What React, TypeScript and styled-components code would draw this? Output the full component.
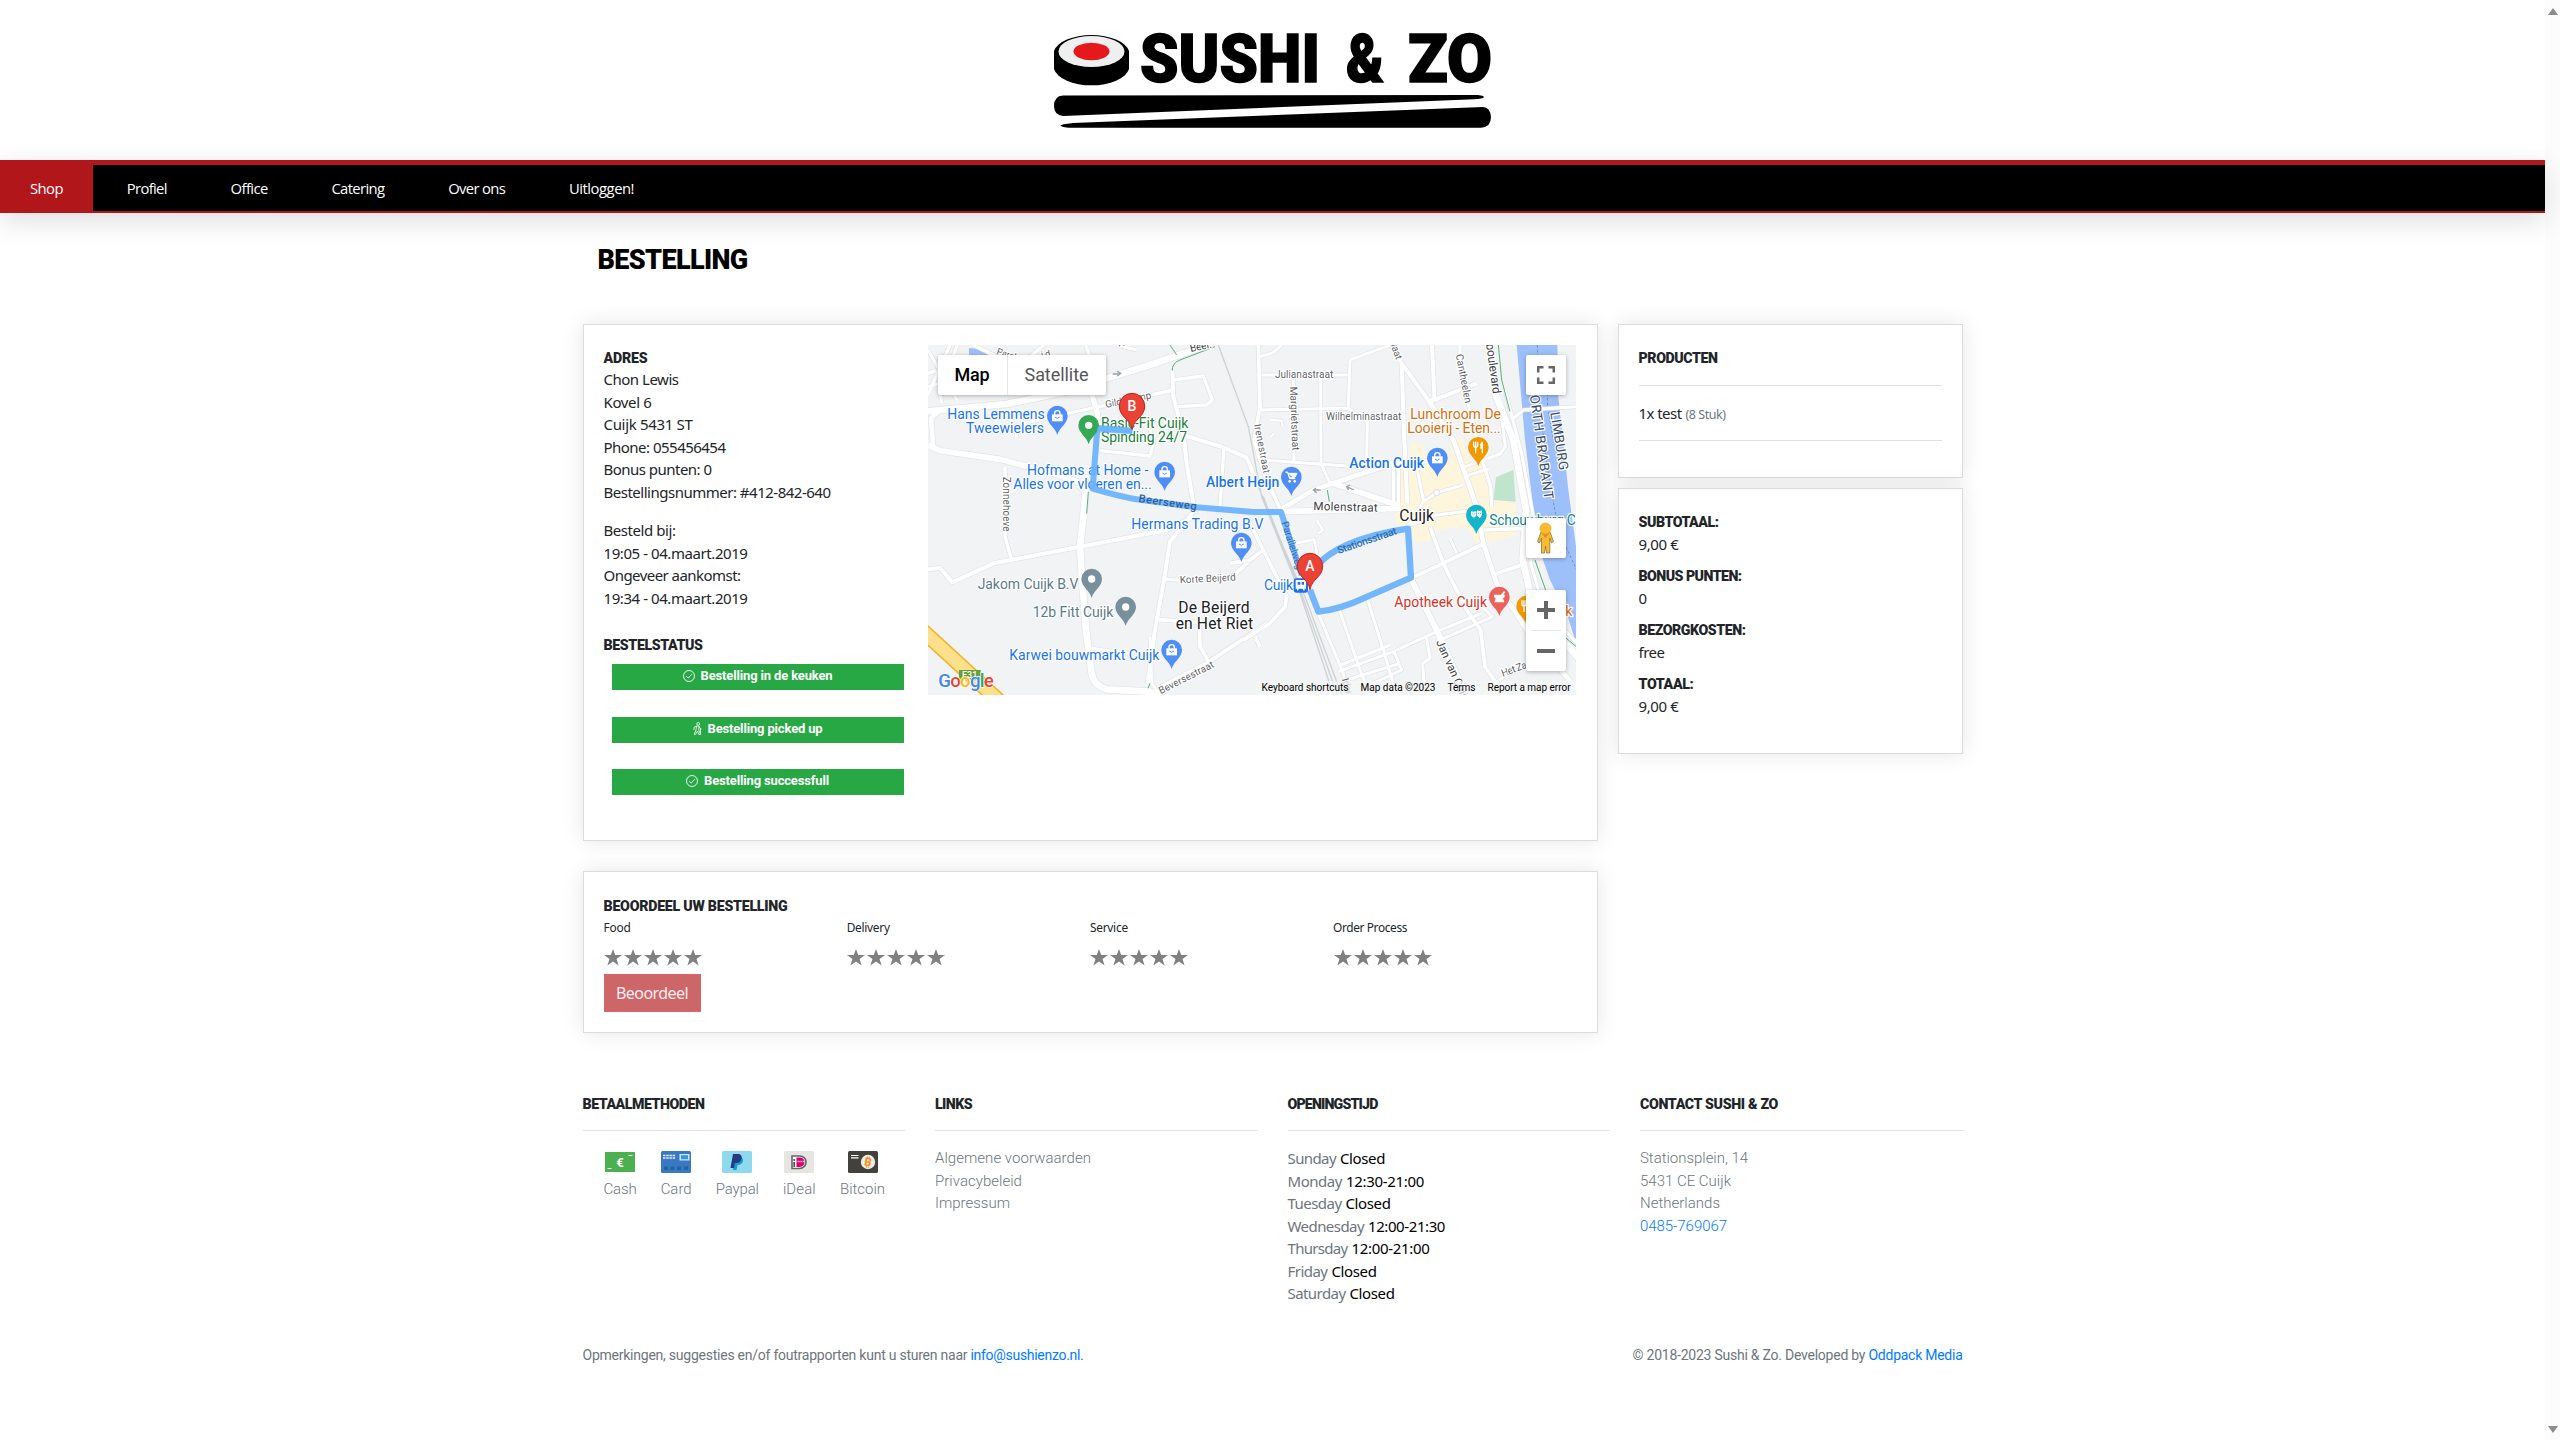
import React, { useLayoutEffect, useRef, useState } from 'react';
import styled, { createGlobalStyle, css } from 'styled-components';

const sans = '"Noto Sans", "Open Sans", sans-serif';
const roboto = 'Roboto, "Liberation Sans", sans-serif';

const Global = createGlobalStyle`
  *, *::before, *::after { box-sizing: border-box; }
  html, body { margin: 0; padding: 0; background: #fff; overflow: hidden; }
  body { font-family: ${sans}; font-size: 15px; line-height: 22.5px; color: #212529; }
`;

/* ---------- text fitted to a fixed measure by tracking ---------- */

const Tracked = styled.span`
  display: inline-block;
  white-space: pre;
`;

function Fit({ w, children }: { w: number; children: string }) {
  const ref = useRef<HTMLSpanElement>(null);
  const [gap, setGap] = useState<number | null>(null);
  useLayoutEffect(() => {
    if (ref.current && gap === null) {
      const natural = ref.current.getBoundingClientRect().width;
      setGap((w - natural) / children.length);
    }
  }, [gap, w, children]);
  return (
    <Tracked ref={ref} style={gap === null ? undefined : { letterSpacing: gap }}>
      {children}
    </Tracked>
  );
}

/* ---------- page frame ---------- */

const Page = styled.div`
  display: grid;
  grid-template-columns: 1fr 15px;
  height: 1440px;
`;

const ScrollTrack = styled.div`
  background: #fcfcfc;
  display: flex;
  flex-direction: column;
  justify-content: space-between;
  align-items: center;
  padding: 8px 0 7px;
`;

const Arrow = styled.i<{ $down?: boolean }>`
  border: 5px solid transparent;
  border-top-width: 0;
  border-bottom: 7px solid #8b8b8b;
  ${(p) => p.$down && css`transform: rotate(180deg);`}
`;

const Header = styled.header`
  height: 160px;
  display: flex;
  justify-content: center;
  padding-top: 31px;
`;

const Nav = styled.nav`
  position: relative;
  height: 53px;
  background: #000;
  border-top: 5px solid #b1161a;
  border-bottom: 2px solid #b1161a;
  box-shadow: 0 8px 28px rgba(0, 0, 0, 0.13);
  display: flex;
  gap: 3.8px;
`;

const NavItem = styled.a<{ $active?: boolean }>`
  padding: 0 30px;
  line-height: 46px;
  font-family: "Open Sans", sans-serif;
  font-size: 14.8px;
  color: #fff;
  background: ${(p) => (p.$active ? '#b1161a' : 'transparent')};
`;

const Container = styled.div`
  width: 1380px;
  margin: 0 auto;
`;

const Title = styled.h1`
  margin: 0;
  height: 111px;
  padding: 27px 0 0 15px;
  font: 900 27px/40px ${roboto};
  color: #000;
`;

const Heading = styled.h2`
  margin: 0;
  height: 24px;
  padding-top: 1px;
  font: 900 14.2px/25px ${roboto};
  color: #212529;
`;

const Columns = styled.div`
  display: grid;
  grid-template-columns: 1015px 345px;
  justify-content: space-between;
`;

const Stack = styled.div<{ $gap: number }>`
  display: flex;
  flex-direction: column;
  align-items: stretch;
  gap: ${(p) => p.$gap}px;
`;

const Card = styled.section<{ $h: number }>`
  height: ${(p) => p.$h}px;
  padding: 20px;
  border: 1px solid #dcdcdc;
  box-shadow: 0 0 20px rgba(0, 0, 0, 0.1);
  background: #fff;
`;

const OrderCard = styled(Card)`
  display: grid;
  grid-template-columns: 300px 648px;
  column-gap: 24px;
`;

const Block = styled.div<{ $mb: number }>`
  margin-top: -0.7px;
  margin-bottom: ${(p) => p.$mb}px;
`;

const Line = styled.div`
  height: 22.5px;
`;

const StatusList = styled.div`
  display: flex;
  flex-direction: column;
  gap: 26.6px;
  margin: 8px 0 0 8px;
`;

const Status = styled.div`
  height: 26px;
  background: #28a745;
  color: #fff;
  display: flex;
  align-items: center;
  justify-content: center;
  gap: 6px;
  font: 700 13px/24px ${roboto};
  padding-bottom: 2px;
`;

const Rule = styled.hr<{ $m: string }>`
  border: 0;
  border-top: 1px solid #e2e2e2;
  margin: ${(p) => p.$m};
`;

const Muted = styled.small`
  font-size: 12.5px;
  color: #6c757d;
  margin-left: 4px;
`;

const SummaryRow = styled.div`
  height: 54px;
`;

const RatingCard = styled(Card)`
  padding-top: 21px;
`;

const RatingGrid = styled.div`
  display: grid;
  grid-template-columns: repeat(4, 243.2px);
  margin-top: 1px;
`;

const RatingLabel = styled.div`
  font-size: 11.9px;
  line-height: 18px;
  color: #212529;
`;

const Stars = styled.div`
  display: flex;
  gap: 2px;
  padding: 13px 0 0 0.5px;
  height: 38px;
`;

const RateButton = styled.button`
  width: 97px;
  height: 38px;
  padding: 0;
  border: 1px solid #e4606a;
  background: #cd6669;
  color: #fbeeee;
  font: 16px/36px ${sans};
`;

/* ---------- map ---------- */

const MapBox = styled.div`
  position: relative;
  width: 648px;
  height: 350px;
  overflow: hidden;
  background: #f1f3f4;
`;

const MapTypes = styled.div`
  position: absolute;
  left: 10px;
  top: 10px;
  display: flex;
  height: 40px;
  background: #fff;
  border-radius: 2px;
  box-shadow: 0 1px 4px rgba(0, 0, 0, 0.3);
`;

const MapType = styled.div<{ $on?: boolean }>`
  padding: 0 17px;
  font: ${(p) => (p.$on ? 500 : 400)} 18px/40px ${roboto};
  color: ${(p) => (p.$on ? '#000' : '#565656')};
  & + & { border-left: 1px solid #e6e6e6; }
`;

const MapButton = styled.div<{ $top: number; $h: number }>`
  position: absolute;
  left: 598px;
  top: ${(p) => p.$top}px;
  width: 40px;
  height: ${(p) => p.$h}px;
  background: #fff;
  border-radius: 2px;
  box-shadow: 0 1px 4px rgba(0, 0, 0, 0.3);
  svg { display: block; }
`;

const MapTerms = styled.div`
  position: absolute;
  right: 0;
  bottom: 0;
  height: 14px;
  display: flex;
  gap: 12px;
  padding: 0 5px 0 6px;
  background: rgba(245, 245, 245, 0.7);
  font: 10px/14px ${roboto};
  color: #000;
`;

/* ---------- footer ---------- */

const FooterGrid = styled.footer`
  display: grid;
  grid-template-columns: repeat(4, 322.5px);
  justify-content: space-between;
  padding-top: 58px;
  height: 311px;
`;

const FooterText = styled.div`
  font-family: ${roboto};
  font-weight: 300;
  font-size: 15px;
  color: #6c757d;
`;

const HoursText = styled.div`
  color: #6c757d;
  margin-top: 0.5px;
`;

const Hours = styled.span`
  color: #000;
  margin-left: 4px;
`;

const Link = styled.a`
  color: #007bff;
`;

const Payments = styled.div`
  display: flex;
  justify-content: space-between;
  padding: 0 20px 0 21px;
`;

const Payment = styled.div`
  display: flex;
  flex-direction: column;
  align-items: center;
  font: 300 15px/22px ${roboto};
  color: #6c757d;
  svg { margin-bottom: 5px; display: block; }
`;

const Bottom = styled.div`
  display: flex;
  justify-content: space-between;
  font: 14px/22px ${roboto};
  color: #6c757d;
`;

/* ---------- drawings ---------- */

const Logo = () => (
  <svg width="440" height="98" viewBox="0 0 440 98">
    <path d="M1 20A38 19 0 0 1 76 20V38A38 19.500 0 0 1 1 38Z" />
    <ellipse cx="38.500" cy="20.500" rx="33" ry="15.500" fill="#eef0f0" />
    <ellipse cx="38.500" cy="20.500" rx="18" ry="8.700" fill="#e5191c" />
    <g fontFamily="Roboto, sans-serif" fontWeight="900" fontSize="66" stroke="#000" strokeWidth="1.500">
      <text x="87" y="50.500" textLength="180" lengthAdjust="spacingAndGlyphs">SUSHI</text>
      <text x="293" y="50.500" textLength="38" lengthAdjust="spacingAndGlyphs">&amp;</text>
      <text x="355" y="50.500" textLength="84" lengthAdjust="spacingAndGlyphs">ZO</text>
    </g>
    <path d="M10 64.500L425 64Q433 65 430 67Q427 68 415 68.500L10 85Q1 84 1 75Q1 65 10 64.500Z" />
    <path d="M430 76L20 92Q5 93.500 8 95Q10 97 22 96.800H428Q438 96 438 86Q437 76 430 76Z" />
  </svg>
);

const CheckIcon = () => (
  <svg width="12" height="12" viewBox="0 0 12 12" fill="none" stroke="#fff" strokeWidth=".9">
    <circle cx="6" cy="6" r="5.500" />
    <path d="M3.200 6.200L5.200 8.100L8.900 4.200" />
  </svg>
);

const WalkIcon = () => (
  <svg width="9" height="13" viewBox="0 0 9 13" fill="none" stroke="#fff" strokeWidth=".8">
    <circle cx="5.200" cy="1.900" r="1.400" />
    <path d="M3.500 4L1 5.500V8M3.500 4H6L6.600 6L8.500 7M3.500 4L3 8L1.200 12.300H2.600L4.500 9L5.800 12.500H7.500L5.800 8L6 4.500M7.500 7V12" />
  </svg>
);

const Star = () => (
  <svg width="18" height="17" viewBox="0 0 17 17" preserveAspectRatio="none">
    <path fill="#808080" d="M8.500 0L10.600 6H17L11.800 9.900L13.800 16.500L8.500 12.500L3.200 16.500L5.200 9.900L0 6H6.400Z" />
  </svg>
);

type Road = [string, number];

const westRoads: Road[] = [
  ['M0 246L260 222L500 172L560 145L690 105L850 50', 20],
  ['M505 170L518 200L532 250L535 290', 16],
  ['M24 345L60 362L240 388L400 430L470 455L497 490', 17],
  ['M40 355L33 265L60 240', 14],
  ['M497 480L490 560L480 650L487 760L498 900L515 1030Q520 1065 560 1078L690 1085L740 1110', 20],
  ['M0 720L60 714L97 757L220 700L480 650L740 600L820 560', 12],
  ['M255 410L255 620L275 690', 10],
  ['M290 322L290 300L320 278L420 255L540 230L760 180', 10],
  ['M757 120L760 200L790 310L800 400L815 490L822 530', 12],
  ['M760 150L850 138L877 210L860 225L770 230', 10],
  ['M790 315L910 352L980 383L1000 430', 12],
  ['M912 352L900 530', 10],
  ['M540 362L690 378L702 330L690 300', 10],
  ['M820 545L750 635L732 750L705 900L683 1060', 12],
  ['M690 920L695 1060L720 1095', 9],
  ['M720 1072L860 1000L1040 880', 12],
  ['M705 868L838 878L840 950L872 1005', 11],
  ['M732 747L790 752', 9],
  ['M920 755L1030 655', 12],
  ['M515 955L640 972', 9],
  ['M24 195L90 45M24 130L48 122M24 60L112 212M112 45L80 130M160 45L250 90M372 45L330 80M497 45L510 80M590 45L650 60M24 170L60 160L64 220', 10],
];

const eastRoads: Road[] = [
  ['M25 45L30 230L12 330L45 440L90 535', 11],
  ['M30 80L70 68L95 45', 9],
  ['M35 135L295 135M30 240L295 235M300 90L295 235L352 275L350 390M300 90L420 45', 9],
  ['M130 150L132 395M212 135L213 400L240 460M40 390L290 408', 9],
  ['M60 270L95 272L98 290M60 322L72 310', 7],
  ['M425 45L455 100L462 310L472 520', 12],
  ['M455 100L538 215L553 205L546 45M540 215L680 160', 12],
  ['M538 215L560 250L610 330L680 530L700 640L740 760L830 900L1000 1100', 14],
  ['M630 45L630 80M650 200L690 370L722 470L725 530', 10],
  ['M430 400V525M445 400V525', 10],
  ['M640 412L750 372L766 350L755 265M650 437L716 417M500 410L520 510', 9],
  ['M470 595L520 515L560 488L640 465M470 590L560 555L680 540', 9],
  ['M700 600L830 595M490 742L700 642M735 732L830 700', 11],
  ['M790 265L820 240L980 230', 9],
  ['M540 590L580 700L650 840L692 900L705 1010L750 1075', 11],
  ['M265 830L330 1020L360 1095M350 800L400 960L440 1095M205 850L280 1030L290 1090', 9],
  ['M265 1025L430 965L560 905L695 850M265 1008L420 945M370 1060L455 1020L432 965M290 1050L450 1000', 9],
  ['M560 935L728 860L700 835M530 925L540 985L518 1000L522 1060', 9],
  ['M137 640L192 628L205 690M200 570L218 600L205 610M600 625L620 670', 8],
  ['M-60 700L0 690L40 660L-10 560M40 660L110 800L105 830L60 880L-20 930M15 920L30 950', 11],
  ['M700 1095L760 1040L850 1000', 10],
  ['M480 740L560 900L650 1100', 17],
  ['M90 540L190 480L250 460L430 400L590 390', 14],
  ['M250 460L450 528M90 545L450 535', 17],
  ['M735 190L790 330L828 540L818 690L850 830L990 990', 20],
  ['M765 180L815 370L850 560L842 700L880 830L990 950', 9],
];

const Roads = ({ roads }: { roads: Road[] }) => (
  <g fill="none" strokeLinejoin="round">
    {roads.map(([d, w]) => <path key={d} d={d} stroke="#e0e3e6" strokeWidth={w + 4} />)}
    {roads.map(([d, w]) => <path key={d} d={d} stroke="#fff" strokeWidth={w} />)}
  </g>
);

interface LabelProps {
  x: number; y: number; w: number; t: string; c?: string; s?: number; r?: number; b?: boolean;
}

const Label = ({ x, y, w, t, c = '#1a73e8', s = 42, r = 0, b }: LabelProps) => (
  <text
    x={x} y={y} textLength={w} fontSize={s} fill={c} fontWeight={b ? 500 : 400}
    transform={r ? `rotate(${r} ${x} ${y})` : undefined}
    stroke="#fff" strokeWidth="7" strokeLinejoin="round" paintOrder="stroke"
  >{t}</text>
);

const westLabels: LabelProps[] = [
  { x: 228, y: 72, w: 60, t: 'Paral', c: '#5f6368', s: 28, r: 18 },
  { x: 365, y: 85, w: 28, t: 'id', c: '#5f6368', s: 28, r: -12 },
  { x: 595, y: 50, w: 60, t: 'Noor', c: '#5f6368', s: 30, r: -10 },
  { x: 812, y: 66, w: 66, t: 'Beer.', c: '#3c4043', s: 32, r: -12 },
  { x: 558, y: 234, w: 140, t: 'Gildekamp', c: '#5f6368', s: 30, r: -12 },
  { x: 250, y: 440, w: 165, t: 'Zonnehoeve', c: '#5f6368', s: 30, r: 90 },
  { x: 1002, y: 284, w: 150, t: 'Irenestraat', c: '#5f6368', s: 30, r: 79 },
  { x: 82, y: 267, w: 292, t: 'Hans Lemmens' },
  { x: 138, y: 309, w: 234, t: 'Tweewielers' },
  { x: 543, y: 294, w: 262, t: 'Basic-Fit Cuijk', c: '#188038' },
  { x: 543, y: 336, w: 258, t: 'Spinding 24/7', c: '#188038' },
  { x: 321, y: 435, w: 364, t: 'Hofmans at Home -' },
  { x: 280, y: 477, w: 415, t: 'Alles voor vloeren en...' },
  { x: 858, y: 471, w: 220, t: 'Albert Heijn', b: true },
  { x: 634, y: 597, w: 396, t: 'Hermans Trading B.V' },
  { x: 173, y: 777, w: 302, t: 'Jakom Cuijk B.V', c: '#5b7a88' },
  { x: 338, y: 861, w: 242, t: '12b Fitt Cuijk', c: '#5b7a88' },
  { x: 268, y: 990, w: 450, t: 'Karwei bouwmarkt Cuijk' },
  { x: 780, y: 760, w: 168, t: 'Korte Beijerd', c: '#5f6368', s: 30, r: -3 },
  { x: 775, y: 850, w: 214, t: 'De Beijerd', c: '#202124', s: 47 },
  { x: 767, y: 898, w: 232, t: 'en Het Riet', c: '#202124', s: 47 },
  { x: 722, y: 1093, w: 182, t: 'Beversestraat', c: '#5f6368', s: 30, r: -27 },
];

const eastLabels: LabelProps[] = [
  { x: 75, y: 144, w: 175, t: 'Julianastraat', c: '#5f6368', s: 31 },
  { x: 228, y: 270, w: 226, t: 'Wilhelminastraat', c: '#5f6368', s: 31 },
  { x: 120, y: 170, w: 192, t: 'Margrietstraat', c: '#5f6368', s: 31, r: 88 },
  { x: 422, y: 45, w: 48, t: 'raat', c: '#5f6368', s: 30, r: 70 },
  { x: 617, y: 74, w: 150, t: 'Cantheelen', c: '#5f6368', s: 31, r: 79 },
  { x: 708, y: 42, w: 152, t: 'boulevard', c: '#3c4043', s: 36, r: 82 },
  { x: 835, y: 166, w: 346, t: 'NORTH BRABANT', c: '#3c4a63', s: 40, r: 82 },
  { x: 901, y: 248, w: 176, t: 'LIMBURG', c: '#3c4a63', s: 40, r: 81 },
  { x: 481, y: 267, w: 272, t: 'Lunchroom De', c: '#d56e0c' },
  { x: 472, y: 309, w: 280, t: 'Looierij - Eten...', c: '#d56e0c' },
  { x: 298, y: 414, w: 224, t: 'Action Cuijk', b: true },
  { x: 190, y: 540, w: 193, t: 'Molenstraat', c: '#3c4043', s: 35, r: 1.500 },
  { x: 448, y: 572, w: 104, t: 'Cuijk', c: '#202124', s: 47 },
  { x: 718, y: 585, w: 320, t: 'Schouwburg Cuijk', c: '#12858d' },
  { x: 42, y: 780, w: 87, t: 'Cuijk' },
  { x: 433, y: 831, w: 278, t: 'Apotheek Cuijk', c: '#d93025' },
  { x: 558, y: 936, w: 200, t: 'Jan van Cuijk', c: '#3c4043', s: 34, r: 66 },
  { x: 758, y: 1040, w: 110, t: 'Het Zand', c: '#5f6368', s: 30, r: -20 },
  { x: 946, y: 858, w: 20, t: 'k', c: '#d56e0c' },
];

const Pin = ({ x, y, c, kind }: { x: number; y: number; c: string; kind: 'dot' | 'bag' | 'cart' | 'food' | 'mask' | 'pharm' }) => (
  <g transform={`translate(${x} ${y})`}>
    <path d="M0 57C-5 35-31 24-31 0A31 31 0 1 1 31 0C31 24 5 35 0 57Z" fill={c} />
    {kind === 'dot' && <circle r="11" fill="#fff" />}
    {kind === 'bag' && (
      <>
        <path d="M-16-5H16V16H-16Z" fill="#fff" />
        <path d="M-8-4V-8A8 8 0 0 1 8-8V-4" fill="none" stroke="#fff" strokeWidth="4" />
        <path d="M-7 3Q0 11 7 3" fill="none" stroke={c} strokeWidth="3" />
      </>
    )}
    {kind === 'cart' && (
      <>
        <path d="M-18-15H-11L-5 5H12M-10-11H17L11 1H-6Z" fill="#fff" stroke="#fff" strokeWidth="3" />
        <circle cx="-5" cy="13" r="4" fill="#fff" /><circle cx="10" cy="13" r="4" fill="#fff" />
      </>
    )}
    {kind === 'food' && (
      <>
        <path d="M-14-17V-6Q-14 0-8 0Q-2 0-2-6V-17M-8-17V18" fill="none" stroke="#fff" strokeWidth="4" />
        <path d="M6 18V-10Q8-17 14-17V18H10V4H6Z" fill="#fff" />
      </>
    )}
    {kind === 'mask' && (
      <>
        <path d="M-16-12Q-8-8 0-12V0Q-2 8-8 8Q-16 6-16-2Z" fill="#fff" />
        <path d="M2-14Q10-10 17-14V-2Q16 7 9 8Q3 5 2 0Z" fill="#fff" />
        <path d="M-12-3H-9M-6-3H-3M5-5H8M11-5H14" stroke={c} strokeWidth="3" />
      </>
    )}
    {kind === 'pharm' && <path d="M-16-7H5L14-18L18-14L12-7H16V0L11 4L15 16H-15L-11 4L-16 0Z" fill="#fff" />}
  </g>
);

const Marker = ({ x, y, t }: { x: number; y: number; t: string }) => (
  <g transform={`translate(${x} ${y})`}>
    <path d="M0 71C-5 38-38 34-38 0A38 38 0 1 1 38 0C38 34 5 38 0 71Z" fill="#ea4335" stroke="#c5221f" strokeWidth="3" />
    <text y="14" textAnchor="middle" fontSize="42" fontWeight="500" fill="#fff">{t}</text>
  </g>
);

const MapDrawing = () => (
  <svg width="648" height="350" viewBox="0 0 1944 1050" fontFamily="Roboto, sans-serif">
    <g transform="translate(966 -45)">
      <path d="M480 335L520 345V365L600 390V325L635 320L660 400H700L722 500L798 520V618L680 642L650 590L560 600L545 630L500 637L482 600L435 580L442 400H480Z" fill="#fdf5dc" />
      <path d="M738 442L790 420L797 515L730 510Z" fill="#c1e4cd" />
      <path d="M800 45H922L925 200L955 480L985 700V960L950 850L900 750L855 620L848 520L825 330Z" fill="#9dc0fa" />
      <path d="M862 45L866 200L890 400L925 600L980 720M890 120L893 230L910 330" fill="none" stroke="#6e8fc4" strokeWidth="3" strokeDasharray="8 6" />
    </g>
    <g transform="translate(-24 -45)">
      <path d="M147 54L185 58L245 78H147Z" fill="#9dc0fa" />
      <Roads roads={westRoads} />
      <path d="M0 895L245 1120" stroke="#f4b11f" strokeWidth="47" />
      <path d="M0 895L245 1120" stroke="#fde08c" strokeWidth="38" />
      <path d="M750 45L770 75M885 50L780 90Q755 100 757 122M505 485L500 550M690 1060L684 1075" stroke="#55b377" strokeWidth="3" fill="none" />
      <path d="M578 132H600M592 124L602 130L592 138" stroke="#9aa0a6" strokeWidth="4" fill="none" />
    </g>
    <g transform="translate(966 -45)">
      <Roads roads={eastRoads} />
      <path d="M-95 45L-5 290L35 500L150 790L250 1095M22 460L60 560L165 800L275 1095M40 500L158 800L262 1095" fill="none" stroke="#cfd2d5" strokeWidth="4" />
      <path d="M745 45L755 150L780 245M855 690L887 780M895 880L985 955M232 480L238 515" stroke="#55b377" strokeWidth="3" fill="none" />
      <circle cx="560" cy="488" r="9" fill="#fff" stroke="#dcdfe3" strokeWidth="3" />
      <path d="M190 480H212M198 474L190 480L200 488M290 470L312 480M300 465L290 470L296 480" stroke="#9aa0a6" strokeWidth="4" fill="none" />
      <path d="M180 780L205 845Q270 838 340 805L483 743L474 596Q370 610 290 645Q225 675 205 705" fill="none" stroke="#73b6fc" strokeWidth="19" strokeLinejoin="round" />
    </g>
    <g transform="translate(-24 -45)">
      {westLabels.map((l) => <Label key={l.t} {...l} />)}
      <path d="M637 302L532 294L518 476Q600 500 650 508L830 532L1000 546H1083L1145 735" fill="none" stroke="#69b2ff" strokeOpacity=".93" strokeWidth="18" strokeLinejoin="round" />
      <text x="655" y="516" textLength="175" fontSize="33" fill="#2f5f94" fontWeight="500" transform="rotate(8 655 516)">Beerseweg</text>
      <Pin x={412} y={258} c="#4f8df7" kind="bag" />
      <Pin x={506} y={286} c="#34a853" kind="dot" />
      <Pin x={734} y={426} c="#4f8df7" kind="bag" />
      <Pin x={964} y={639} c="#4f8df7" kind="bag" />
      <Pin x={515} y={747} c="#78909c" kind="dot" />
      <Pin x={617} y={831} c="#78909c" kind="dot" />
      <Pin x={755} y={960} c="#4f8df7" kind="bag" />
      <path d="M532 298L637 304" stroke="#69b2ff" strokeOpacity=".7" strokeWidth="17" />
      <Marker x={636} y={228} t="B" />
      <path d="M117 1020H182V1050H117Z" fill="#689f38" />
      <text x="126" y="1044" fontSize="27" fontWeight="500" fill="#fff">E31</text>
      <text x="55" y="1071" fontSize="56" textLength="166" fontWeight="500" stroke="#fff" strokeWidth="4" paintOrder="stroke">
        <tspan fill="#4285f4">G</tspan><tspan fill="#ea4335">o</tspan><tspan fill="#fbbc04">o</tspan>
        <tspan fill="#4285f4">g</tspan><tspan fill="#34a853">l</tspan><tspan fill="#ea4335">e</tspan>
      </text>
    </g>
    <g transform="translate(966 -45)">
      {eastLabels.map((l) => <Label key={l.t} {...l} />)}
      <text x="266" y="672" textLength="186" fontSize="31" fill="#2f6cab" fontWeight="500" transform="rotate(-19 266 672)">Stationsstraat</text>
      <text x="94" y="578" textLength="150" fontSize="30" fill="#2f6cab" transform="rotate(72 94 578)">Parallelweg</text>
      <text x="276" y="1048" fontSize="28" fill="#5f6368" transform="rotate(75 276 1048)">Ider</text>
      <Pin x={124} y={441} c="#4f8df7" kind="cart" />
      <Pin x={562} y={384} c="#4f8df7" kind="bag" />
      <Pin x={685} y={352} c="#f29900" kind="food" />
      <Pin x={679} y={555} c="#12b5cb" kind="mask" />
      <Pin x={748} y={801} c="#ec6159" kind="pharm" />
      <Pin x={830} y={828} c="#f29900" kind="food" />
      <rect x="131" y="745" width="43" height="43" rx="7" fill="#1a73e8" />
      <path d="M139 752H166V774H139ZM142 781L146 774M163 781L159 774" fill="#fff" stroke="#fff" strokeWidth="4" />
      <path d="M143 756H151V764H143ZM155 756H162V764H155Z" fill="#1a73e8" />
      <Marker x={180} y={708} t="A" />
    </g>
  </svg>
);

const DeliveryMap = () => (
  <MapBox>
    <MapDrawing />
    <MapTypes>
      <MapType $on><Fit w={35}>Map</Fit></MapType>
      <MapType><Fit w={64}>Satellite</Fit></MapType>
    </MapTypes>
    <MapButton $top={10} $h={40}>
      <svg width="40" height="40" fill="none" stroke="#666" strokeWidth="2.500">
        <path d="M12.200 17.500V12.200H17.500M22.500 12.200H27.800V17.500M27.800 22.500V27.800H22.500M17.500 27.800H12.200V22.500" />
      </svg>
    </MapButton>
    <MapButton $top={173} $h={40}>
      <svg width="40" height="40">
        <path d="M15 14Q19.500 11 24 14L27.500 23.500L25.500 25L23.800 20V35H20.500L19.500 28L18.500 35H15.500V20L13.500 25L11.500 23.500Z" fill="#fbbc2c" stroke="#85754e" strokeWidth=".8" />
        <path d="M15.500 15L19.500 20L23.500 15Z" fill="#e58a25" />
        <circle cx="19.500" cy="10.500" r="5.500" fill="#fbbc2c" stroke="#e0a11d" strokeWidth=".7" />
      </svg>
    </MapButton>
    <MapButton $top={245} $h={81}>
      <svg width="40" height="81">
        <path d="M11 20H29M20 11V29M11 61H29" stroke="#666" strokeWidth="4" />
        <path d="M5 40.500H35" stroke="#e6e6e6" />
      </svg>
    </MapButton>
    <MapTerms>
      <Fit w={87}>Keyboard shortcuts</Fit>
      <Fit w={75}>Map data ©2023</Fit>
      <Fit w={28}>Terms</Fit>
      <Fit w={83}>Report a map error</Fit>
    </MapTerms>
  </MapBox>
);

const CashIcon = () => (
  <svg width="30" height="22" viewBox="0 0 30 22">
    <path fill="#4caf50" d="M0 1H30V21H0Z" />
    <path stroke="#fff" strokeWidth="1.200" d="M23.500 4.500H27.500M2.500 17.500H6.500" />
    <text x="15" y="15.500" textAnchor="middle" fontSize="13" fontWeight="700" fill="#fff" fontFamily="Roboto">€</text>
  </svg>
);

const CreditIcon = () => (
  <svg width="30" height="22" viewBox="0 0 30 22">
    <rect width="30" height="22" rx="1.500" fill="#3a79c0" />
    <path fill="#cfe6f7" d="M18.500 3H28.500V9.500H18.500Z" />
    <path fill="#3498db" d="M20 4.200H27V8.300H20Z" />
    <path stroke="#dcecf8" strokeWidth="1.300" strokeDasharray="2.500 .7" d="M2 4.500H14.500M2 7H14.500" />
    <path fill="#2163aa" d="M3 15.500H7V19H3ZM9.500 15.500H13.500V19H9.500ZM16 15.500H20V19H16ZM23 15.500H27V19H23Z" />
  </svg>
);

const PaypalIcon = () => (
  <svg width="30" height="22" viewBox="0 0 30 22">
    <rect width="30" height="22" rx="1.500" fill="#8fd9ef" />
    <path fill="#179bd7" d="M13 6H19Q22 8 20.500 11.500Q19 14 15.500 14L14.500 19H11Z" />
    <path fill="#253b80" d="M11 3H17Q20.500 4 19.500 8Q18.500 12 14 12H12.800L12 17H8.500Z" />
  </svg>
);

const IdealIcon = () => (
  <svg width="30" height="22" viewBox="0 0 30 22">
    <rect width="30" height="22" rx="1.500" fill="#e5e5e1" />
    <path d="M8 5H16Q22 6 22 11Q22 17 15 17.500H8Z" fill="#fff" stroke="#666" strokeWidth="1.600" />
    <path d="M12.500 6.500H16Q20.500 7 20.500 11Q20.500 15.500 15.500 16H12.500Z" fill="#d50072" />
    <circle cx="10.200" cy="9" r="1.100" fill="#555" />
    <path d="M10.200 11V16" stroke="#555" strokeWidth="1.800" />
    <path d="M13.500 10.500H20" stroke="#f7bcdc" strokeWidth="1.500" strokeDasharray="1.300 .5" />
  </svg>
);

const BitcoinIcon = () => (
  <svg width="30" height="22" viewBox="0 0 30 22">
    <rect width="30" height="22" rx="1.500" fill="#42413d" />
    <path stroke="#fff" strokeWidth="1.200" d="M3 4.500H10.500M3 6.800H10.500" />
    <circle cx="20" cy="11" r="7.200" fill="#ecebe6" />
    <text x="20" y="15" textAnchor="middle" fontSize="11.500" fontWeight="700" fill="#f7931a" fontFamily="Roboto" transform="rotate(10 20 11)">B</text>
    <path d="M19.500 5.500V7M21.300 5.700V7M18.500 15.200V16.700M20.200 15.400V16.900" stroke="#f7931a" />
  </svg>
);

/* ---------- data ---------- */

const nav: [string, number][] = [['Shop', 33], ['Profiel', 40], ['Office', 37], ['Catering', 53], ['Over ons', 57], ['Uitloggen!', 65]];
const address: [string, number][] = [
  ['Chon Lewis', 75], ['Kovel 6', 48], ['Cuijk 5431 ST', 89], ['Phone: 055456454', 122],
  ['Bonus punten: 0', 108], ['Bestellingsnummer: #412-842-640', 227],
];
const times: [string, number][] = [
  ['Besteld bij:', 72], ['19:05 - 04.maart.2019', 144], ['Ongeveer aankomst:', 137], ['19:34 - 04.maart.2019', 144],
];
const statuses: [string, number, 'check' | 'walk'][] = [
  ['Bestelling in de keuken', 132, 'check'], ['Bestelling picked up', 115, 'walk'], ['Bestelling successfull', 125, 'check'],
];
const totals: [string, number, string, number][] = [
  ['SUBTOTAAL:', 80, '9,00 €', 40], ['BONUS PUNTEN:', 103, '0', 8], ['BEZORGKOSTEN:', 107, 'free', 26], ['TOTAAL:', 55, '9,00 €', 40],
];
const ratings: [string, number][] = [['Food', 27], ['Delivery', 43], ['Service', 38], ['Order Process', 74]];
const payments: [string, number, React.FC][] = [
  ['Cash', 33, CashIcon], ['Card', 31, CreditIcon], ['Paypal', 43, PaypalIcon], ['iDeal', 33, IdealIcon], ['Bitcoin', 45, BitcoinIcon],
];
const links: [string, number][] = [['Algemene voorwaarden', 156], ['Privacybeleid', 87], ['Impressum', 75]];
const hours: [string, number, string, number][] = [
  ['Sunday', 48.5, 'Closed', 45], ['Monday', 54.5, '12:30-21:00', 78], ['Tuesday', 54, 'Closed', 45], ['Wednesday', 76.5, '12:00-21:30', 77],
  ['Thursday', 60, '12:00-21:00', 78], ['Friday', 40, 'Closed', 45], ['Saturday', 58, 'Closed', 45],
];
const contact: [string, number][] = [['Stationsplein, 14', 108], ['5431 CE Cuijk', 91], ['Netherlands', 80]];

export default function App() {
  return (
    <Page>
      <Global />
      <div>
        <Header><Logo /></Header>
        <Nav>
          {nav.map(([t, w], i) => <NavItem key={t} $active={i === 0}><Fit w={w}>{t}</Fit></NavItem>)}
        </Nav>
        <Container>
          <Title><Fit w={150}>BESTELLING</Fit></Title>
          <Columns>
            <Stack $gap={30}>
              <OrderCard $h={517}>
                <div>
                  <Heading><Fit w={44}>ADRES</Fit></Heading>
                  <Block $mb={16.7}>
                    {address.map(([t, w]) => <Line key={t}><Fit w={w}>{t}</Fit></Line>)}
                  </Block>
                  <Block $mb={22.7}>
                    {times.map(([t, w]) => <Line key={t}><Fit w={w}>{t}</Fit></Line>)}
                  </Block>
                  <Heading><Fit w={99}>BESTELSTATUS</Fit></Heading>
                  <StatusList>
                    {statuses.map(([t, w, icon]) => (
                      <Status key={t}>
                        {icon === 'check' ? <CheckIcon /> : <WalkIcon />}
                        <Fit w={w}>{t}</Fit>
                      </Status>
                    ))}
                  </StatusList>
                </div>
                <DeliveryMap />
              </OrderCard>
              <RatingCard $h={162}>
                <Heading><Fit w={184}>BEOORDEEL UW BESTELLING</Fit></Heading>
                <RatingGrid>
                  {ratings.map(([t, w]) => (
                    <div key={t}>
                      <RatingLabel><Fit w={w}>{t}</Fit></RatingLabel>
                      <Stars>{[0, 1, 2, 3, 4].map((n) => <Star key={n} />)}</Stars>
                    </div>
                  ))}
                </RatingGrid>
                <RateButton><Fit w={72}>Beoordeel</Fit></RateButton>
              </RatingCard>
            </Stack>
            <Stack $gap={10}>
              <Card $h={154}>
                <Heading><Fit w={79}>PRODUCTEN</Fit></Heading>
                <Rule $m="16px 0" />
                <Line><Fit w={43}>1x test</Fit><Muted><Fit w={40}>(8 Stuk)</Fit></Muted></Line>
                <Rule $m="15px 0" />
              </Card>
              <Card $h={266}>
                {totals.map(([t, w, v, vw]) => (
                  <SummaryRow key={t}>
                    <Heading><Fit w={w}>{t}</Fit></Heading>
                    <Line><Fit w={vw}>{v}</Fit></Line>
                  </SummaryRow>
                ))}
              </Card>
            </Stack>
          </Columns>
          <FooterGrid>
            <div>
              <Heading><Fit w={122}>BETAALMETHODEN</Fit></Heading>
              <Rule $m="15px 0 20px" />
              <Payments>
                {payments.map(([t, w, Icon]) => <Payment key={t}><Icon /><Fit w={w}>{t}</Fit></Payment>)}
              </Payments>
            </div>
            <div>
              <Heading><Fit w={37}>LINKS</Fit></Heading>
              <Rule $m="15px 0 16px" />
              <FooterText>{links.map(([t, w]) => <Line key={t}><Fit w={w}>{t}</Fit></Line>)}</FooterText>
            </div>
            <div>
              <Heading><Fit w={90}>OPENINGSTIJD</Fit></Heading>
              <Rule $m="15px 0 16px" />
              <HoursText>
                {hours.map(([d, w, h, hw]) => <Line key={d}><Fit w={w}>{d}</Fit><Hours><Fit w={hw}>{h}</Fit></Hours></Line>)}
              </HoursText>
            </div>
            <div>
              <Heading><Fit w={138}>CONTACT SUSHI & ZO</Fit></Heading>
              <Rule $m="15px 0 16px" />
              <FooterText>
                {contact.map(([t, w]) => <Line key={t}><Fit w={w}>{t}</Fit></Line>)}
                <Line><Link><Fit w={87}>0485-769067</Fit></Link></Line>
              </FooterText>
            </div>
          </FooterGrid>
          <Bottom>
            <div><Fit w={388}>{'Opmerkingen, suggesties en/of foutrapporten kunt u sturen naar '}</Fit><Link><Fit w={113}>info@sushienzo.nl.</Fit></Link></div>
            <div><Fit w={236}>{'© 2018-2023 Sushi & Zo. Developed by '}</Fit><Link><Fit w={94}>Oddpack Media</Fit></Link></div>
          </Bottom>
        </Container>
      </div>
      <ScrollTrack><Arrow /><Arrow $down /></ScrollTrack>
    </Page>
  );
}
